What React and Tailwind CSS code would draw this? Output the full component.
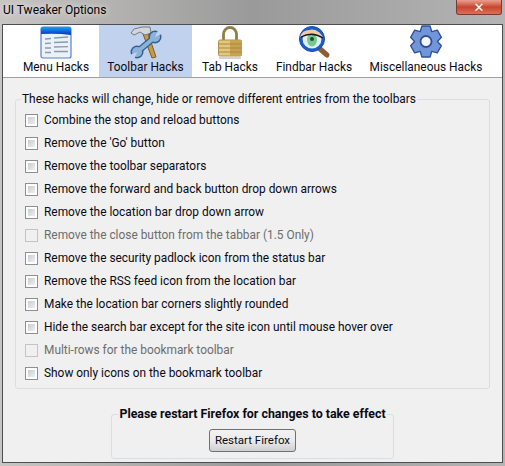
import React from 'react';

const hacks = [
  { label: 'Combine the stop and reload buttons' },
  { label: "Remove the 'Go' button" },
  { label: 'Remove the toolbar separators' },
  { label: 'Remove the forward and back button drop down arrows' },
  { label: 'Remove the location bar drop down arrow' },
  { label: 'Remove the close button from the tabbar (1.5 Only)', disabled: true },
  { label: 'Remove the security padlock icon from the status bar' },
  { label: 'Remove the RSS feed icon from the location bar' },
  { label: 'Make the location bar corners slightly rounded' },
  { label: 'Hide the search bar except for the site icon until mouse hover over' },
  { label: 'Multi-rows for the bookmark toolbar', disabled: true },
  { label: 'Show only icons on the bookmark toolbar' },
];

function MenuIcon() {
  return (
    <svg width="34" height="34" viewBox="0 0 34 34">
      <defs>
        <linearGradient id="menuTop" x1="0" y1="0" x2="0" y2="1">
          <stop offset="0" stopColor="#12a0f4" />
          <stop offset="1" stopColor="#0a2fc8" />
        </linearGradient>
      </defs>
      <rect x="2" y="2" width="30" height="31" rx="2" fill="#eaf1fb" stroke="#5a80cc" strokeWidth="1.2" />
      <path d="M2 9V4a2 2 0 0 1 2-2h26a2 2 0 0 1 2 2v6q-14-2-30-1z" fill="url(#menuTop)" />
      <path d="M6 14l6-.5M6 18.500l6-.3M6 23h6M6 27.500h6M15 13l14-1M15 17.500l14-.5M15 22l14-.3M15 26.500h14" stroke="#8e99ac" strokeWidth="1.300" />
    </svg>
  );
}

function ToolsIcon() {
  return (
    <svg width="36" height="34" viewBox="0 0 36 34">
      {/* handle */}
      <path d="M15 9l9 24 4-1-8-24z" fill="#c89a45" stroke="#7f5c22" strokeWidth="1" />
      {/* hammer head */}
      <path d="M3 8l3-4 8-2h8l1 6-6 2-5-3-6 3z" fill="#d4d6d8" stroke="#777b80" strokeWidth="1" strokeLinejoin="round" />
      {/* wrench */}
      <path d="M9 27L27 12" stroke="#33608f" strokeWidth="6.500" />
      <circle cx="9" cy="27" r="6.500" fill="#33608f" />
      <circle cx="27" cy="12" r="6.500" fill="#33608f" />
      <path d="M9 27L27 12" stroke="#8db2da" strokeWidth="4" />
      <circle cx="9" cy="27" r="5" fill="#8db2da" />
      <circle cx="27" cy="12" r="5" fill="#8db2da" />
      <path d="M27 12L31 3 36 8z" fill="#c1d2ee" />
      <path d="M9 27L2 30 6 35z" fill="#c1d2ee" />
    </svg>
  );
}

function LockIcon() {
  return (
    <svg width="26" height="34" viewBox="0 0 26 34">
      <path d="M6.500 16V9a6.500 6.500 0 0 1 13 0v7" fill="none" stroke="#8f7f45" strokeWidth="2.800" />
      <rect x="1.500" y="15" width="23" height="16" rx="1.500" fill="#e2c77f" stroke="#b09347" />
      <rect x="13" y="15" width="11.500" height="16" fill="#c8a24e" />
      <path d="M1.500 19h23M1.500 23h23M1.500 27h23" stroke="#a98a3e" strokeWidth="1" />
      <path d="M2 33h22" stroke="#c4c4c4" strokeWidth="1.500" />
    </svg>
  );
}

function FindIcon() {
  return (
    <svg width="34" height="34" viewBox="0 0 34 34">
      <path d="M22 23l8 7" stroke="#8f5d33" strokeWidth="5" strokeLinecap="round" />
      <circle cx="15" cy="14" r="12.500" fill="#1c5cc8" stroke="#174aa8" />
      <circle cx="15" cy="14" r="9.500" fill="#dff1f7" />
      <path d="M3 12q2-8 12-7 8 1 11 7-12-5-23 0z" fill="#efc9a8" />
      <ellipse cx="15" cy="15" rx="5" ry="6.500" fill="#78c98f" />
      <circle cx="15" cy="14" r="2" fill="#1f4a2d" />
      <path d="M4 12q11-6 22 1" fill="none" stroke="#1a1a1a" strokeWidth="1.300" />
    </svg>
  );
}

// six toothed gear, points worked out once at load
const gearPoints = Array.from({ length: 6 }, (_, i) => {
  const a = (i * Math.PI) / 3 - Math.PI / 2;
  const pt = (r, d) => `${(17 + r * Math.cos(a + d)).toFixed(1)},${(16.5 + r * Math.sin(a + d)).toFixed(1)}`;
  return [pt(11.5, -0.52), pt(16, -0.26), pt(16, 0.26), pt(11.5, 0.52)].join(' ');
}).join(' ');

function GearIcon() {
  return (
    <svg width="34" height="34" viewBox="0 0 34 34">
      <polygon points={gearPoints} fill="#7096d8" stroke="#2f4f9c" strokeWidth="1.300" strokeLinejoin="round" />
      <circle cx="17" cy="16.500" r="5.500" fill="#f4f6fb" stroke="#2f4f9c" strokeWidth="1.800" />
    </svg>
  );
}

const tabs = [
  { label: 'Menu Hacks', Icon: MenuIcon, width: 'w-[86px]' },
  { label: 'Toolbar Hacks', Icon: ToolsIcon, width: 'w-[93px]', active: true },
  { label: 'Tab Hacks', Icon: LockIcon, width: 'w-[76px]' },
  { label: 'Findbar Hacks', Icon: FindIcon, width: 'w-[92px]' },
  { label: 'Miscellaneous Hacks', Icon: GearIcon, width: 'w-[132px]' },
];

function Check({ disabled }) {
  return (
    <span
      className={
        disabled
          ? 'w-[13px] h-[13px] shrink-0 border border-[#c4c4c4] bg-[#f0f0f0]'
          : 'w-[13px] h-[13px] shrink-0 border border-[#8e8f8f] bg-white p-[2px]'
      }
    >
      {!disabled && <span className="block w-full h-full bg-gradient-to-br from-[#c9ccd1] to-[#eef0f2]" />}
    </span>
  );
}

export default function App() {
  return (
    <div className="w-[505px] h-[466px] overflow-hidden flex flex-col bg-gradient-to-r from-[#c8c6c4] via-[#9a9a9a] to-[#b4b4b4] font-['Roboto',sans-serif] text-[11.9px] text-[#0a0a14]">
      {/* Title bar */}
      <div className="h-[24px] shrink-0 flex justify-between pl-[3px] pr-[3px]">
        <span className="text-[12px] leading-[20px] text-black [text-shadow:0_0_6px_#ffffff]">UI Tweaker Options</span>
        <div className="w-[46px] h-[15px] flex items-center justify-center rounded-b-[3px] border border-t-0 border-[#7a3a34] bg-gradient-to-b from-[#e9a08f] via-[#c9432f] to-[#d9705a]">
          <span className="text-white text-[13px] leading-none font-bold font-['DejaVu_Sans',sans-serif]">✕</span>
        </div>
      </div>

      {/* Client area */}
      <div className="flex-1 mx-[2px] mb-[3px] border border-[#4e4e4e] bg-[#f0f0f0] flex flex-col min-h-0">
        <div className="h-[53px] shrink-0 bg-white border-b border-[#a0a0a0] flex pl-[10px]">
          {tabs.map(({ label, Icon, width, active }) => (
            <div
              key={label}
              className={`${width} shrink-0 flex flex-col items-center ${active ? 'bg-[#c1d2ee]' : ''}`}
            >
              <Icon />
              <span className="leading-[16px] whitespace-nowrap">{label}</span>
            </div>
          ))}
        </div>

        <fieldset className="mt-[13px] mx-[12px] h-[298px] shrink-0 border border-[#d5dfe5] rounded-[3px]">
          <legend className="ml-[5px] px-[1px] leading-[16px] whitespace-nowrap">
            These hacks will change, hide or remove different entries from the toolbars
          </legend>
          <div className="mt-[2px] pl-[9px] flex flex-col">
            {hacks.map(({ label, disabled }) => (
              <label key={label} className={`h-[23px] flex items-center gap-[6px] ${disabled ? 'text-[#6d6d6d]' : ''}`}>
                <Check disabled={disabled} />
                <span className="whitespace-nowrap">{label}</span>
              </label>
            ))}
          </div>
        </fieldset>

        <fieldset className="mt-[17px] ml-[108px] w-[283px] h-[53px] shrink-0 border border-[#d5dfe5] rounded-[3px]">
          <legend className="mx-auto px-[1px] font-bold text-[12.400px] leading-[16px] whitespace-nowrap">Please restart Firefox for changes to take effect</legend>
          <button className="mt-[7px] mx-auto block w-[87px] h-[23px] rounded-[3px] border border-[#707070] bg-gradient-to-b from-[#f2f2f2] via-[#ebebeb] to-[#cfcfcf] text-[11.500px] leading-none">
            Restart Firefox
          </button>
        </fieldset>
      </div>
    </div>
  );
}
